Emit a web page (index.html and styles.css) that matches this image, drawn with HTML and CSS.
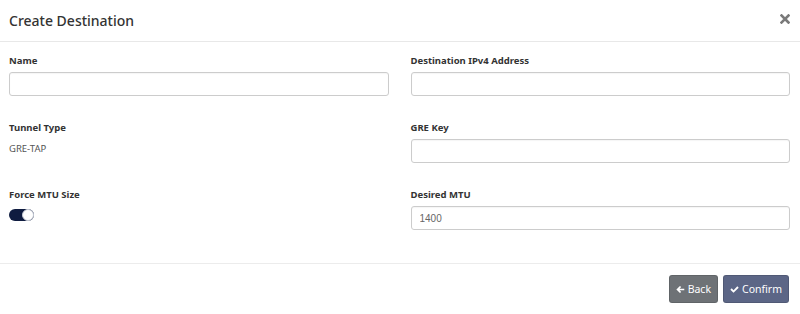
FILE: index.html
```html
<!DOCTYPE html>
<html>
	<head>
		<meta charset="UTF-8">
		<title>Create Destination</title>
		<link rel="stylesheet" href="styles.css">
	</head>
	<body>
		<div class="modal">
			<div class="modal-header">
				<h4 class="modal-title">Create Destination</h4>
				<button class="close" type="button">
					<svg width="10" height="10" viewBox="0 0 10 10"><path d="M1.5 1.5 L8.5 8.5 M8.5 1.5 L1.5 8.5" stroke="#7a7a7a" stroke-width="2.6" stroke-linecap="square"/></svg>
				</button>
			</div>
			<div class="modal-body">
				<div class="field">
					<label>Name</label>
					<input type="text" class="form-control">
				</div>
				<div class="field">
					<label>Destination IPv4 Address</label>
					<input type="text" class="form-control">
				</div>
				<div class="field">
					<label>Tunnel Type</label>
					<p class="static">GRE-TAP</p>
				</div>
				<div class="field">
					<label>GRE Key</label>
					<input type="text" class="form-control">
				</div>
				<div class="field">
					<label>Force MTU Size</label>
					<span class="switch on"><span class="knob"></span></span>
				</div>
				<div class="field">
					<label>Desired MTU</label>
					<input type="text" class="form-control" value="1400">
				</div>
			</div>
			<div class="modal-footer">
				<button class="btn btn-back" type="button">
					<svg width="11" height="11" viewBox="0 0 10 10"><path d="M0.4 5 L4.6 0.8 L6 2.2 L4.1 4 L9.6 4 L9.6 6 L4.1 6 L6 7.8 L4.6 9.2 Z" fill="#fff"/></svg>
					Back
				</button>
				<button class="btn btn-confirm" type="button">
					<svg width="11" height="11" viewBox="0 0 10 10"><path d="M0.4 5.2 L1.9 3.7 L3.9 5.7 L8.1 1.5 L9.6 3 L3.9 8.7 Z" fill="#fff"/></svg>
					Confirm
				</button>
			</div>
		</div>
	</body>
</html>
```

FILE: styles.css
```css
body{
	margin: 0;
	background: #fff;
	font-family: "Noto Sans", "Open Sans", sans-serif;
	color: #333;
}
.modal{
	width: 800px;
	height: 314px;
	display: flex;
	flex-direction: column;
}
.modal-header{
	height: 42px;
	box-sizing: border-box;
	padding: 0 10px 0 9px;
	border-bottom: 1px solid #e8e8e8;
	display: flex;
	align-items: center;
	justify-content: space-between;
}
.modal-title{
	margin: 0;
	font-size: 14px;
	font-weight: 500;
	color: #333;
}
.close{
	border: 0;
	background: none;
	padding: 0;
	width: 10px;
	height: 10px;
	display: flex;
	margin-top: -4px;
}
.modal-body{
	padding: 12px 10px 0 9px;
	display: grid;
	grid-template-columns: 1fr 1fr;
	column-gap: 22px;
	row-gap: 25px;
	height: 222px;
	box-sizing: border-box;
	border-bottom: 1px solid #ececec;
	align-content: start;
}
.field{
	display: flex;
	flex-direction: column;
	align-items: flex-start;
}
.field label{
	font-size: 9.5px;
	font-weight: bold;
	line-height: 14px;
	margin-bottom: 4px;
	color: #333;
}
.form-control{
	width: 100%;
	height: 24px;
	box-sizing: border-box;
	border: 1px solid #ccc;
	border-radius: 3px;
	padding: 0 8px;
	font-family: "Liberation Sans", Arial, sans-serif;
	font-size: 10px;
	color: #666;
	margin: 0;
	box-shadow: inset 0 1px 1px rgba(0,0,0,0.04);
}
.static{
	margin: 3px 0 0;
	font-size: 9.5px;
	color: #555;
	line-height: 14px;
}
.switch{
	display: block;
	margin-top: 3px;
	width: 25px;
	height: 12px;
	border-radius: 6px;
	background: #0f1c40;
	position: relative;
}
.switch .knob{
	position: absolute;
	right: 0;
	top: 0;
	width: 12px;
	height: 12px;
	box-sizing: border-box;
	border-radius: 50%;
	background: #fff;
	border: 1px solid #c8ccd6;
}
.modal-footer{
	display: flex;
	justify-content: flex-end;
	gap: 5px;
	padding: 11px 11px 0 0;
}
.btn{
	height: 28px;
	border: 1px solid rgba(0,0,0,0.12);
	border-radius: 3px;
	color: #fff;
	font-family: "Noto Sans", "Open Sans", sans-serif;
	font-size: 10.5px;
	padding: 0 6px;
	display: flex;
	align-items: center;
	gap: 3px;
}
.btn-back{
	background: #6e7276;
	width: 49px;
}
.btn-confirm{
	background: #5c6686;
	width: 66px;
}
```
